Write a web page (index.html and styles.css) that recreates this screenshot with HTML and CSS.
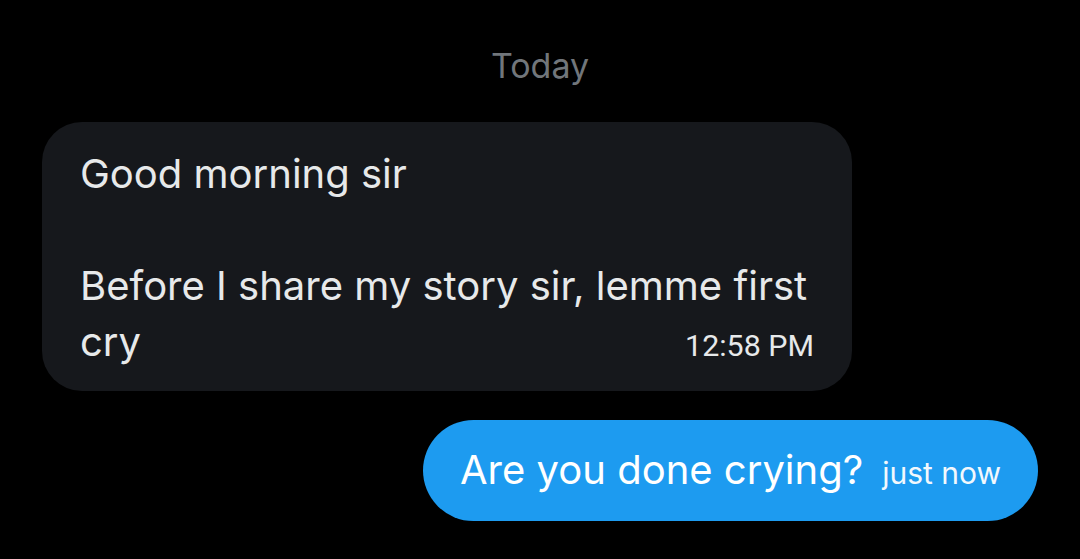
FILE: index.html
```html
<!DOCTYPE html>
<html>
<head>
<meta charset="utf-8">
<link rel="stylesheet" href="styles.css">
</head>
<body>
<div class="chat">
  <div class="day">Today</div>
  <div class="row in">
    <div class="bubble dark">
      <p class="msg">Good morning sir</p>
      <p class="msg second">Before I share my story sir, lemme first</p>
      <div class="last">
        <span class="msg">cry</span>
        <span class="time">12:58 PM</span>
      </div>
    </div>
  </div>
  <div class="row out">
    <div class="bubble blue">
      <span class="msg-out">Are you done crying?</span>
      <span class="time-out">just now</span>
    </div>
  </div>
</div>
</body>
</html>
```
FILE: styles.css
```css
html, body {
  margin: 0;
  padding: 0;
  background: #000;
}
.chat {
  width: 1080px;
  height: 559px;
  box-sizing: border-box;
  padding: 46px 42px 0 42px;
  font-family: Inter, "Open Sans", sans-serif;
  color: #e7e9ea;
}
.day {
  text-align: center;
  color: #71767b;
  font-size: 34px;
  line-height: 40px;
}
.row {
  display: flex;
}
.row.in {
  margin-top: 36px;
  justify-content: flex-start;
}
.row.out {
  margin-top: 29px;
  justify-content: flex-end;
}
.bubble.dark {
  width: 810px;
  box-sizing: border-box;
  background: #16181c;
  border-radius: 40px;
  padding: 24px 38px 21px 38px;
}
.msg {
  margin: 0;
  font-size: 40px;
  line-height: 56px;
}
.msg.second {
  margin-top: 56px;
}
.last {
  display: flex;
  justify-content: space-between;
  align-items: baseline;
}
.time {
  font-family: Roboto, sans-serif;
  font-size: 30.4px;
  line-height: 40px;
  color: #e7e9ea;
}
.bubble.blue {
  background: #1d9bf0;
  border-radius: 51px;
  height: 101px;
  box-sizing: border-box;
  padding: 0 37px 0 37px;
  display: flex;
  align-items: baseline;
  gap: 19px;
  line-height: 99px;
  color: #fff;
}
.msg-out {
  font-size: 40px;
}
.time-out {
  font-size: 30px;
  color: #f2f8fd;
}
```
